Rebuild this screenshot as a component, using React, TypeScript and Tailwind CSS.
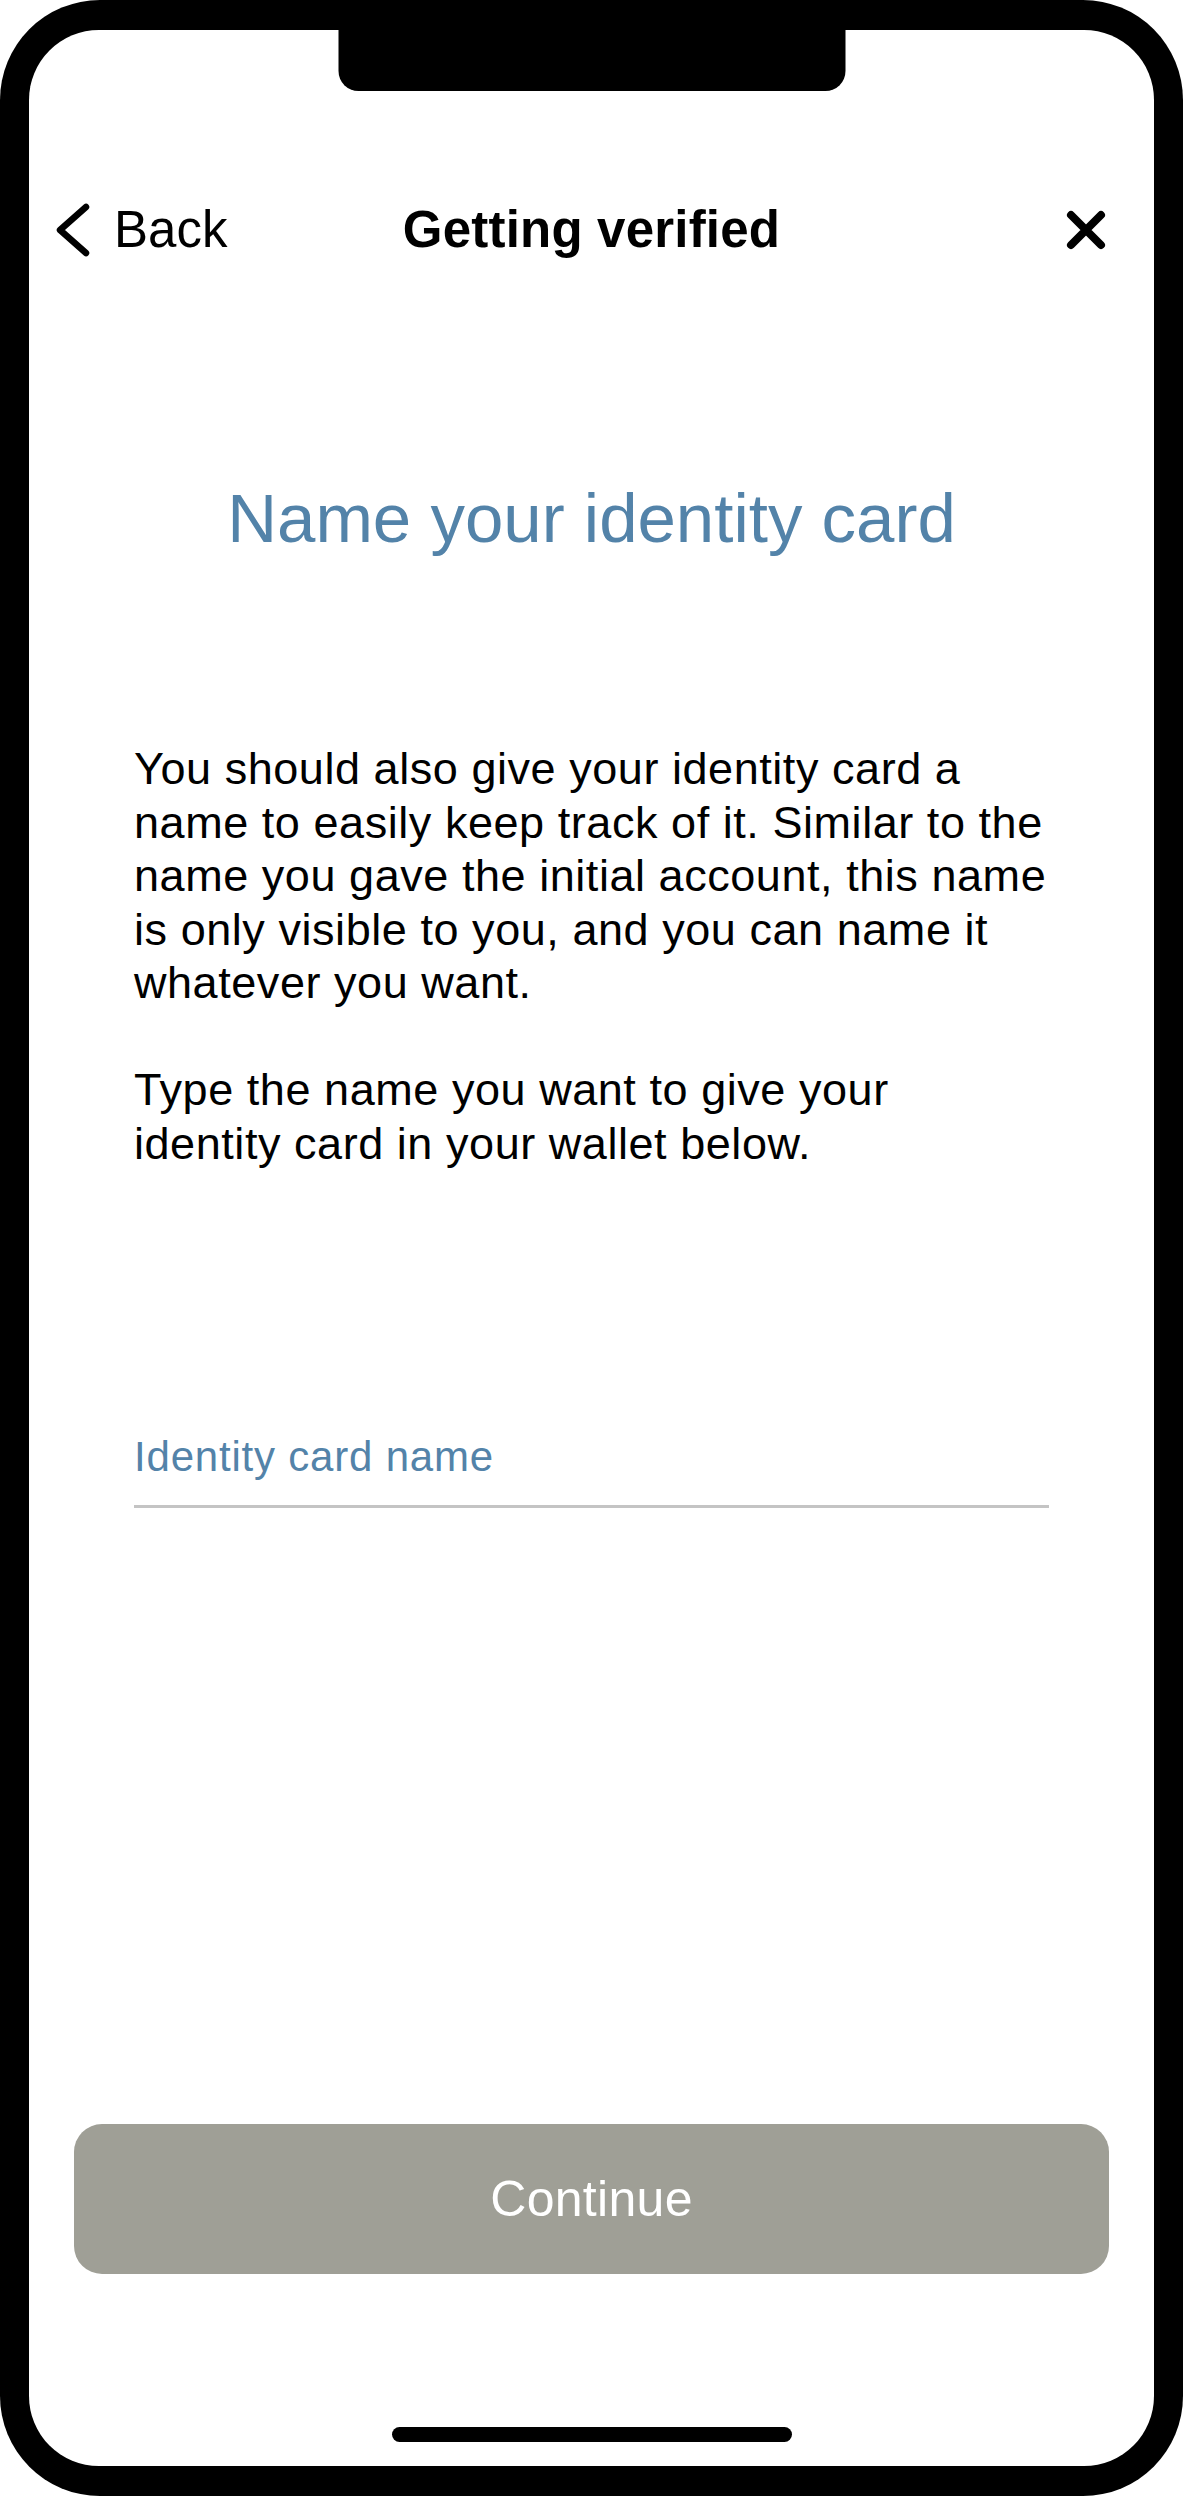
import React from 'react';

const bodyLines1 = [
  'You should also give your identity card a',
  'name to easily keep track of it. Similar to the',
  'name you gave the initial account, this name',
  'is only visible to you, and you can name it',
  'whatever you want.',
];

const bodyLines2 = ['Type the name you want to give your', 'identity card in your wallet below.'];

const ChevronLeft: React.FC = () => (
  <svg width="38" height="60" viewBox="0 0 38 60" fill="none">
    <path d="M32 7 L6 30 L32 53" stroke="#000" strokeWidth="6.5" strokeLinecap="round" strokeLinejoin="round" />
  </svg>
);

const CloseIcon: React.FC = () => (
  <svg width="40" height="40" viewBox="0 0 40 40" fill="none">
    <path d="M5 5 L35 35 M35 5 L5 35" stroke="#000" strokeWidth="8" strokeLinecap="round" />
  </svg>
);

const App: React.FC = () => {
  return (
    <div
      className="w-[1183px] h-[2496px] bg-black rounded-[100px] pt-[30px] pb-[30px] px-[29px]"
      style={{ fontFamily: '"Liberation Sans", Arial, sans-serif' }}
    >
      <div className="relative h-full bg-white rounded-[70px] flex flex-col">
        {/* notch */}
        <div className="absolute top-0 left-1/2 -translate-x-1/2 w-[507px] h-[61px] bg-black rounded-b-[20px]" />

        {/* header */}
        <div className="mt-[170px] h-[56px] grid grid-cols-[1fr_auto_1fr] items-center px-[25px]">
          <div className="flex items-center gap-[22px]">
            <ChevronLeft />
            <span className="text-[51px] leading-[56px] text-black">Back</span>
          </div>
          <h1 className="text-[51px] leading-[56px] tracking-[0.2px] font-bold text-black">Getting verified</h1>
          <div className="flex justify-end pr-[23px]">
            <CloseIcon />
          </div>
        </div>

        {/* title */}
        <h2 className="mt-[223px] text-center text-[69px] leading-[80px] text-[#5383a9]">
          Name your identity card
        </h2>

        {/* body */}
        <div className="mt-[183px] px-[105px] text-[45px] leading-[53.5px] tracking-[0.55px] text-black">
          <div>
            {bodyLines1.map(line => (
              <div key={line} className="whitespace-nowrap">{line}</div>
            ))}
          </div>
          <div className="mt-[53.5px]">
            {bodyLines2.map(line => (
              <div key={line} className="whitespace-nowrap">{line}</div>
            ))}
          </div>
        </div>

        {/* input */}
        <div className="mt-[262px] mx-[105px]">
          <div className="text-[42px] leading-[50px] tracking-[0.8px] text-[#5383a9]">Identity card name</div>
          <div className="mt-[23px] h-[3px] bg-[#c4c4c4]" />
        </div>

        {/* button */}
        <div className="mt-auto px-[45px]">
          <button className="w-full h-[150px] rounded-[28px] bg-[#9f9f96] text-white text-[50px] tracking-[0.3px]">
            Continue
          </button>
        </div>

        {/* home indicator */}
        <div className="mt-[153px] mb-[24px] flex justify-center">
          <div className="w-[400px] h-[15px] rounded-full bg-black" />
        </div>
      </div>
    </div>
  );
};

export default App;
